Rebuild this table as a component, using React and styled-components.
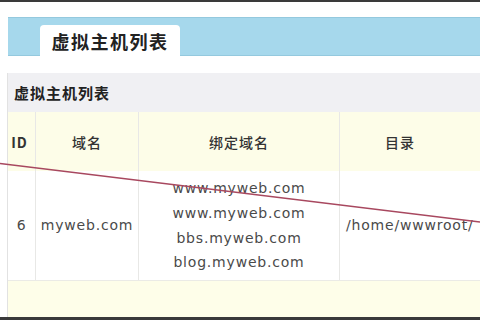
import React from "react"
import styled, { createGlobalStyle } from "styled-components"

const GlobalStyle = createGlobalStyle`
  html, body {
    margin: 0;
    padding: 0;
    background: #fff;
  }
  body {
    width: 480px;
    height: 320px;
    overflow: hidden;
    font-family: "DejaVu Sans", "Noto Sans CJK SC", sans-serif;
  }
`

const cjk = `"Noto Sans CJK SC", "DejaVu Sans", sans-serif`

const Page = styled.div`
  position: relative;
  width: 480px;
  height: 320px;
  overflow: hidden;
  display: flex;
  flex-direction: column;
`

const TopRule = styled.div`
  height: 2px;
  background: #3a3a3a;
`

const Banner = styled.div`
  margin: 15px 0 0 8px;
  height: 37px;
  background: #a6d8ec;
  border-top: 1px solid #94c9de;
  border-bottom: 1px solid #94c9de;
  display: flex;
  align-items: flex-end;
  padding-left: 32px;
`

const Tab = styled.div`
  width: 140px;
  height: 31px;
  margin-bottom: -1px;
  background: #fff;
  border-radius: 4px 4px 0 0;
  display: flex;
  align-items: center;
  justify-content: center;
  font-family: ${cjk};
  font-weight: bold;
  font-size: 18px;
  letter-spacing: 1.5px;
  color: #222;
`

const Panel = styled.div`
  margin: 17px 0 0 7px;
  border-left: 1px solid #e2e2e2;
  display: flex;
  flex-direction: column;
  flex: 1;
`

const PanelTitle = styled.div`
  height: 39px;
  background: #f0f0f3;
  display: flex;
  align-items: center;
  padding-left: 6px;
  font-family: ${cjk};
  font-weight: bold;
  font-size: 15px;
  letter-spacing: 1px;
  color: #222;
`

const Row = styled.div`
  display: grid;
  grid-template-columns: 28px 103px 201px 1fr;
  height: ${p => p.$h}px;
  background: ${p => p.$bg};
`

const Cell = styled.div`
  display: flex;
  flex-direction: column;
  align-items: ${p => (p.$left ? "flex-start" : "center")};
  justify-content: center;
  padding: ${p => (p.$left ? "0 0 0 6px" : "0")};
  padding-right: ${p => p.$pr || 0}px;
  border-right: ${p => (p.$last ? "none" : "1px solid #e8e8e6")};
  white-space: nowrap;
  overflow: hidden;
  color: #444;
`

const HeadText = styled.span`
  font-family: ${cjk};
  font-size: 14px;
  letter-spacing: 1px;
  color: #333;
  font-weight: ${p => (p.$bold ? 600 : 500)};
  padding-right: ${p => (p.$bold ? 4 : 0)}px;
`

const DataText = styled.span`
  font-family: "DejaVu Sans", sans-serif;
  font-size: 14px;
  letter-spacing: 0.8px;
  line-height: 24.7px;
  color: #4a4a4a;
`

const Footer = styled.div`
  height: 36px;
  background: #fefee9;
  border-top: 1px solid #ebebe6;
`

const BottomRule = styled.div`
  height: 3px;
  background: #3a3a3a;
`

const Overlay = styled.svg`
  position: absolute;
  left: 0;
  top: 0;
  pointer-events: none;
`

const bound = ["www.myweb.com", "www.myweb.com", "bbs.myweb.com", "blog.myweb.com"]

export default function App() {
  return (
    <>
      <GlobalStyle />
      <Page>
        <TopRule />
        <Banner>
          <Tab>虚拟主机列表</Tab>
        </Banner>
        <Panel>
          <PanelTitle>虚拟主机列表</PanelTitle>
          <Row $h={59} $bg="#fdfde8">
            <Cell><HeadText $bold>ID</HeadText></Cell>
            <Cell><HeadText>域名</HeadText></Cell>
            <Cell><HeadText>绑定域名</HeadText></Cell>
            <Cell $last $pr={20}><HeadText>目录</HeadText></Cell>
          </Row>
          <Row $h={109} $bg="#fff">
            <Cell><DataText>6</DataText></Cell>
            <Cell><DataText>myweb.com</DataText></Cell>
            <Cell>
              {bound.map((d, i) => (
                <DataText key={i}>{d}</DataText>
              ))}
            </Cell>
            <Cell $last $left><DataText>/home/wwwroot/</DataText></Cell>
          </Row>
          <Footer />
        </Panel>
        <BottomRule />
        <Overlay width="480" height="320" viewBox="0 0 480 320">
          <line x1="0" y1="163.5" x2="480" y2="222" stroke="#a8485f" strokeWidth="1.4" />
        </Overlay>
      </Page>
    </>
  )
}
